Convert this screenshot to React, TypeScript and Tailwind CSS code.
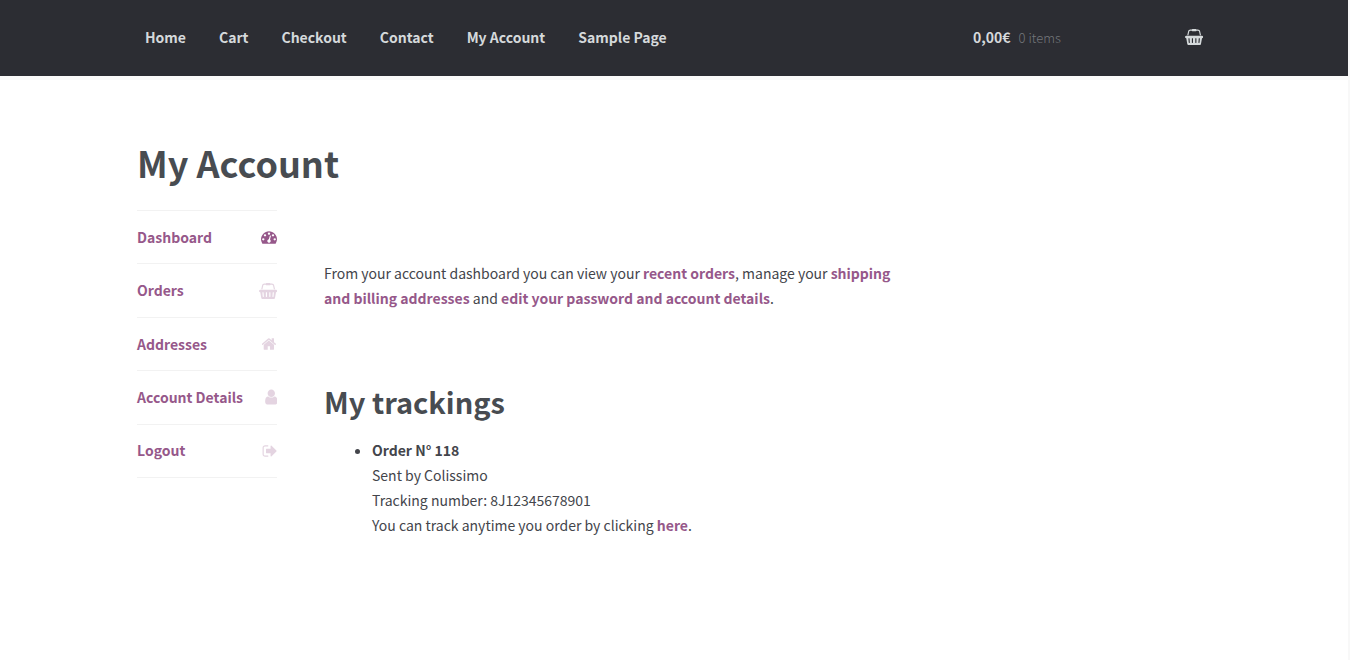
const BASKET =
  "M1920 768q53 0 90.5 37.5t37.5 90.5-37.5 90.5-90.5 37.5h-15l-115 662q-8 46-44 76t-82 30h-1280q-46 0-82-30t-44-76l-115-662h-15q-53 0-90.5-37.5t-37.5-90.5 37.5-90.5 90.5-37.5h1792zm-1435 800q26-2 43.5-22.5t15.5-46.5l-32-416q-2-26-22.5-43.5t-46.5-15.5-43.5 22.5-15.5 46.5l32 416q2 25 20.5 42t43.5 17h5zm411-64v-416q0-26-19-45t-45-19-45 19-19 45v416q0 26 19 45t45 19 45-19 19-45zm384 0v-416q0-26-19-45t-45-19-45 19-19 45v416q0 26 19 45t45 19 45-19 19-45zm352 5l32-416q2-26-15.5-46.5t-43.5-22.5-46.5 15.5-22.5 43.5l-32 416q-2 26 15.5 46.5t43.5 22.5h5q25 0 43.5-17t20.5-42zm-1156-1217l-93 412h-132l101-441q19-88 89-143.5t160-55.5h167q0-26 19-45t45-19h384q26 0 45 19t19 45h167q90 0 160 55.5t89 143.5l101 441h-132l-93-412q-11-44-45.5-72t-79.5-28h-167q0 26-19 45t-45 19h-384q-26 0-45-19t-19-45h-167q-45 0-79.5 28t-45.5 72z";
const GAUGE =
  "M384 1152q0-53-37.5-90.5t-90.5-37.5-90.5 37.5-37.5 90.5 37.5 90.5 90.5 37.5 90.5-37.5 37.5-90.5zm192-448q0-53-37.5-90.5t-90.5-37.5-90.5 37.5-37.5 90.5 37.5 90.5 90.5 37.5 90.5-37.5 37.5-90.5zm428 481l101-382q6-26-7.5-48.5t-38.5-29.5-48 6.5-30 39.5l-101 382q-60 5-107 43.5t-63 98.5q-20 77 20 146t117 89 146-20 89-117q16-60-6-117t-72-91zm660-33q0-53-37.5-90.5t-90.5-37.5-90.5 37.5-37.5 90.5 37.5 90.5 90.5 37.5 90.5-37.5 37.5-90.5zm-640-640q0-53-37.5-90.5t-90.5-37.5-90.5 37.5-37.5 90.5 37.5 90.5 90.5 37.5 90.5-37.5 37.5-90.5zm448 192q0-53-37.5-90.5t-90.5-37.5-90.5 37.5-37.5 90.5 37.5 90.5 90.5 37.5 90.5-37.5 37.5-90.5zm320 448q0 261-141 483-19 29-54 29h-1402q-35 0-54-29-141-221-141-483 0-182 71-348t191-286 286-191 348-71 348 71 286 191 191 286 71 348z";
const HOUSE =
  "M1408 992v480q0 26-19 45t-45 19h-384v-384h-256v384h-384q-26 0-45-19t-19-45v-480q0-1 .5-3t.5-3l575-474 575 474q1 2 1 6zm223-69l-62 74q-8 9-21 11h-3q-13 0-21-7l-692-577-692 577q-12 8-24 7-13-2-21-11l-62-74q-8-10-7-23.5t11-21.5l719-599q32-26 76-26t76 26l244 204v-195q0-14 9-23t23-9h192q14 0 23 9t9 23v408l219 182q10 8 11 21.5t-7 23.5z";
const PERSON =
  "M1536 1399q0 109-62.5 187t-150.5 78h-854q-88 0-150.5-78t-62.5-187q0-85 8.5-160.5t31.5-152 58.5-131 94-89 134.5-34.5q131 128 313 128t313-128q76 0 134.5 34.5t94 89 58.5 131 31.5 152 8.5 160.5zm-256-887q0 159-112.5 271.5t-271.5 112.5-271.5-112.5-112.5-271.5 112.5-271.5 271.5-112.5 271.5 112.5 112.5 271.5z";
const EXIT =
  "M704 1440q0 4 1 20t.5 26.5-3 23.5-10 19.5-20.5 6.5h-320q-119 0-203.5-84.5t-84.5-203.5v-704q0-119 84.5-203.5t203.5-84.5h320q13 0 22.5 9.5t9.5 22.5q0 4 1 20t.5 26.5-3 23.5-10 19.5-20.5 6.5h-320q-66 0-113 47t-47 113v704q0 66 47 113t113 47h312l11.5 1 11.5 3 8 5.5 7 9 2 13.5zm928-544q0 26-19 45l-544 544q-19 19-45 19t-45-19-19-45v-288h-448q-26 0-45-19t-19-45v-384q0-26 19-45t45-19h448v-288q0-26 19-45t45-19 45 19l544 544q19 19 19 45z";

function Icon({ path, viewBox, className = "" }: { path: string; viewBox: string; className?: string }) {
  return (
    <svg viewBox={viewBox} className={`h-4 shrink-0 fill-current ${className}`} aria-hidden="true">
      <path d={path} />
    </svg>
  );
}

const nav = ["Home", "Cart", "Checkout", "Contact", "My Account", "Sample Page"];

const account = [
  { label: "Dashboard", path: GAUGE, viewBox: "0 0 1792 1792", active: true },
  { label: "Orders", path: BASKET, viewBox: "0 0 2048 1792" },
  { label: "Addresses", path: HOUSE, viewBox: "64 0 1664 1792" },
  { label: "Account Details", path: PERSON, viewBox: "240 64 1296 1664" },
  { label: "Logout", path: EXIT, viewBox: "0 0 1664 1792" },
];

function TextLink({ children }: { children: string }) {
  return (
    <a href="#" className="font-bold text-[#96588a]">
      {children}
    </a>
  );
}

export default function App() {
  return (
    <div className="min-h-screen border-r-2 border-[#f8f8f8] bg-white font-['Noto_Sans_CJK_SC','Source_Sans_Pro',sans-serif] text-[14px] leading-[25px] text-[#43454b]">
      <header className="border-b-4 border-[#fafafa]">
        <div className="bg-[#2c2d33] pb-[2px]">
          <div className="mx-auto flex h-[74px] max-w-[1074px] items-center justify-between px-2 text-[#d5d9db]">
            <nav className="flex gap-[33px] font-bold">
              {nav.map((label) => (
                <a key={label} href="#">
                  {label}
                </a>
              ))}
            </nav>
            <a href="#" aria-label="Shopping cart" className="flex w-[230px] items-center justify-between">
              <span className="flex items-baseline gap-2">
                <span className="font-bold">0,00€</span>
                <span className="text-[13px] font-light text-[#74777b]">0 items</span>
              </span>
              <Icon path={BASKET} viewBox="0 0 2048 1792" />
            </a>
          </div>
        </div>
      </header>

      <main className="mx-auto max-w-[1074px] pt-[58px]">
        <h1 className="text-[36px] leading-[48px] font-bold text-[#484c51]">My Account</h1>
        <div className="mt-6 flex gap-[47px]">
          <nav className="w-[140px] shrink-0">
            <ul className="flex h-[268px] flex-col border-t border-[#f2f2f2]">
              {account.map(({ label, path, viewBox, active }) => (
                <li key={label} className="flex-1 border-b border-[#f2f2f2]">
                  <a href="#" className="flex h-full items-center justify-between font-bold text-[#96588a]">
                    {label}
                    <Icon path={path} viewBox={viewBox} className={active ? "" : "opacity-25"} />
                  </a>
                </li>
              ))}
            </ul>
          </nav>
          <div className="max-w-[590px] flex-1 pt-[51px]">
            <p>
              From your account dashboard you can view your <TextLink>recent orders</TextLink>, manage your{" "}
              <TextLink>shipping and billing addresses</TextLink> and{" "}
              <TextLink>edit your password and account details</TextLink>.
            </p>
            <h2 className="mt-[70px] text-[29px] leading-[40px] font-bold text-[#484c51]">My trackings</h2>
            <ul className="mt-[17px] list-disc pl-12">
              <li>
                <strong className="font-bold">Order N° 118</strong>
                <p>Sent by Colissimo</p>
                <p>Tracking number: 8J12345678901</p>
                <p>
                  You can track anytime you order by clicking <TextLink>here</TextLink>.
                </p>
              </li>
            </ul>
          </div>
        </div>
      </main>
    </div>
  );
}
